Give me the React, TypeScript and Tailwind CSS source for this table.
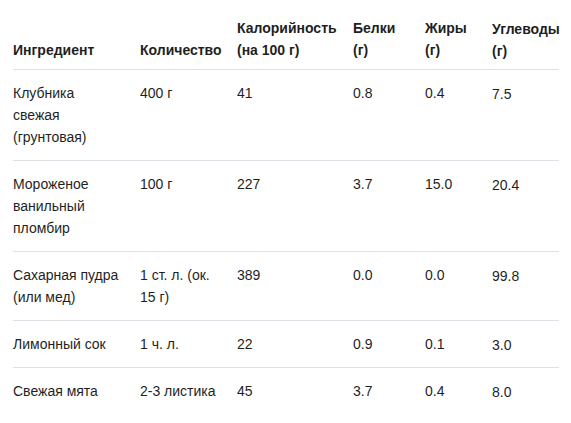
const rows = [
  { name: 'Клубника свежая (грунтовая)', qty: '400 г', kcal: '41', p: '0.8', f: '0.4', c: '7.5' },
  { name: 'Мороженое ванильный пломбир', qty: '100 г', kcal: '227', p: '3.7', f: '15.0', c: '20.4' },
  { name: 'Сахарная пудра (или мед)', qty: '1 ст. л. (ок. 15 г)', kcal: '389', p: '0.0', f: '0.0', c: '99.8' },
  { name: 'Лимонный сок', qty: '1 ч. л.', kcal: '22', p: '0.9', f: '0.1', c: '3.0' },
  { name: 'Свежая мята', qty: '2-3 листика', kcal: '45', p: '3.7', f: '0.4', c: '8.0' },
]

export default function App() {
  const th = 'pb-2 pr-3 text-left align-bottom font-bold border-b border-[#dde0e6]'
  const td = 'py-3 pr-3 align-top border-b border-[#dde0e6]'
  return (
    <div className="min-h-[423px] bg-white px-[13px] pt-[17px] text-[14px] leading-[22px] text-[#1f1f1f] font-['Liberation_Sans',Arial,sans-serif]">
      <table className="table-fixed border-collapse w-[546px]">
        <colgroup>
          <col className="w-[127px]" />
          <col className="w-[97px]" />
          <col className="w-[116px]" />
          <col className="w-[72px]" />
          <col className="w-[67px]" />
          <col className="w-[67px]" />
        </colgroup>
        <thead>
          <tr>
            <th className={`${th} !pr-4`}>Ингредиент</th>
            <th className={th}>Количество</th>
            <th className={th}>Калорийность (на 100 г)</th>
            <th className={th}>Белки (г)</th>
            <th className={th}>Жиры (г)</th>
            <th className={`${th} relative top-px`}>Углеводы (г)</th>
          </tr>
        </thead>
        <tbody>
          {rows.map((r, i) => {
            const last = i === rows.length - 1
            const cell = last ? 'py-3 pr-3 align-top' : td
            return (
              <tr key={r.name}>
                <td className={`${cell} !pr-4`}>{r.name}</td>
                <td className={cell}>{r.qty}</td>
                <td className={cell}>{r.kcal}</td>
                <td className={cell}>{r.p}</td>
                <td className={cell}>{r.f}</td>
                <td className={`${cell} relative top-px`}>{r.c}</td>
              </tr>
            )
          })}
        </tbody>
      </table>
    </div>
  )
}
